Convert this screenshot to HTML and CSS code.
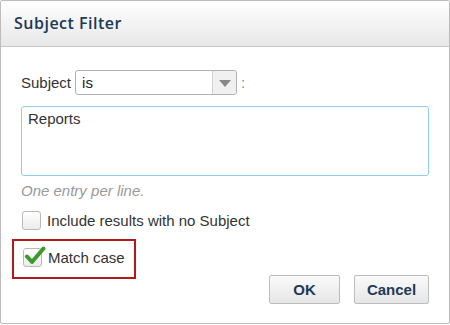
FILE: index.html
```
<!DOCTYPE html>
<html>
<head>
<meta charset="utf-8">
<title>Subject Filter</title>
<link rel="stylesheet" href="styles.css">
</head>
<body>
<div class="dialog">
  <div class="dlg-head">Subject Filter</div>
  <div class="dlg-body">
    <div class="row">
      <span class="lbl">Subject</span>
      <div class="select">
        <span class="sel-val">is</span>
        <span class="sel-btn"><i class="arrow"></i></span>
      </div>
      <span class="colon">:</span>
    </div>
    <div class="textarea">Reports</div>
    <div class="hint">One entry per line.</div>
    <label class="check first"><span class="box"></span>Include results with no Subject</label>
    <div class="bottom">
      <div class="hilite">
        <label class="check"><span class="box"><svg width="22" height="20" viewBox="0 0 22 20"><path d="M3 10.5 L8 16 L19.5 2.5" fill="none" stroke="#3c9a2a" stroke-width="4" stroke-linecap="round" stroke-linejoin="round"/></svg></span>Match case</label>
      </div>
      <div class="btns">
        <button class="btn ok">OK</button>
        <button class="btn cancel">Cancel</button>
      </div>
    </div>
  </div>
</div>
</body>
</html>
```
FILE: styles.css
```
*{margin:0;padding:0;box-sizing:border-box;}
body{font:15px "Liberation Sans",Arial,sans-serif;color:#333;background:#fff;}
/* dialog */
.dialog{width:450px;height:324px;border:1px solid #bcbcbc;border-radius:2px;background:#fff;}
.dlg-head{height:46px;border-bottom:1px solid #c6c6c6;background:linear-gradient(#fff,#e7e7e7);padding:0 13px;font:600 16px/45px "Open Sans",sans-serif;letter-spacing:0.5px;color:#183a57;}
.dlg-body{padding:23px 20px 0 20px;}
.row{display:flex;align-items:center;height:25px;}
.lbl{margin-right:4px;}
.select{width:162px;height:25px;border:1px solid #b0b0b0;border-radius:3px;display:flex;}
.sel-val{flex:1;padding-left:6px;line-height:23px;font-size:15px;color:#222;}
.sel-btn{width:24px;border-left:1px solid #d0d0d0;background:#f0f0f0;display:flex;align-items:center;justify-content:center;border-radius:0 3px 3px 0;}
.arrow{width:0;height:0;border-left:6px solid transparent;border-right:6px solid transparent;border-top:7px solid #888;margin-top:1px;}
.colon{margin-left:4px;color:#888;}
.textarea{margin-top:11px;width:408px;height:70px;border:1px solid #8fcbeb;border-radius:3px;padding:3px 6px;line-height:18px;}
.hint{margin-top:5px;font-style:italic;color:#999;line-height:19px;}
.check{display:flex;align-items:center;height:21px;cursor:pointer;}
.check .box{width:19px;height:19px;border:1px solid #b9b9b9;border-radius:3px;background:linear-gradient(#fff,#ececec);margin:0 6px 0 1px;position:relative;}
.check .box svg{position:absolute;left:0;top:-3px;}
.check.first{margin-top:10px;}
.bottom{display:flex;justify-content:space-between;align-items:flex-start;margin-top:8px;}
.hilite{margin-left:-9px;width:124px;height:40px;border:2px solid #b31b1b;padding:7px 0 0 8px;}
.hilite .check{height:19px;}
.btns{display:flex;gap:14px;margin-top:36px;}
.btn{height:29px;border:1px solid #bdbdbd;border-radius:2px;background:linear-gradient(#fafafa,#e6e6e6);font:bold 15px "Liberation Sans",Arial,sans-serif;color:#1d3a56;}
.ok{width:71px;}
.cancel{width:75px;}
```
